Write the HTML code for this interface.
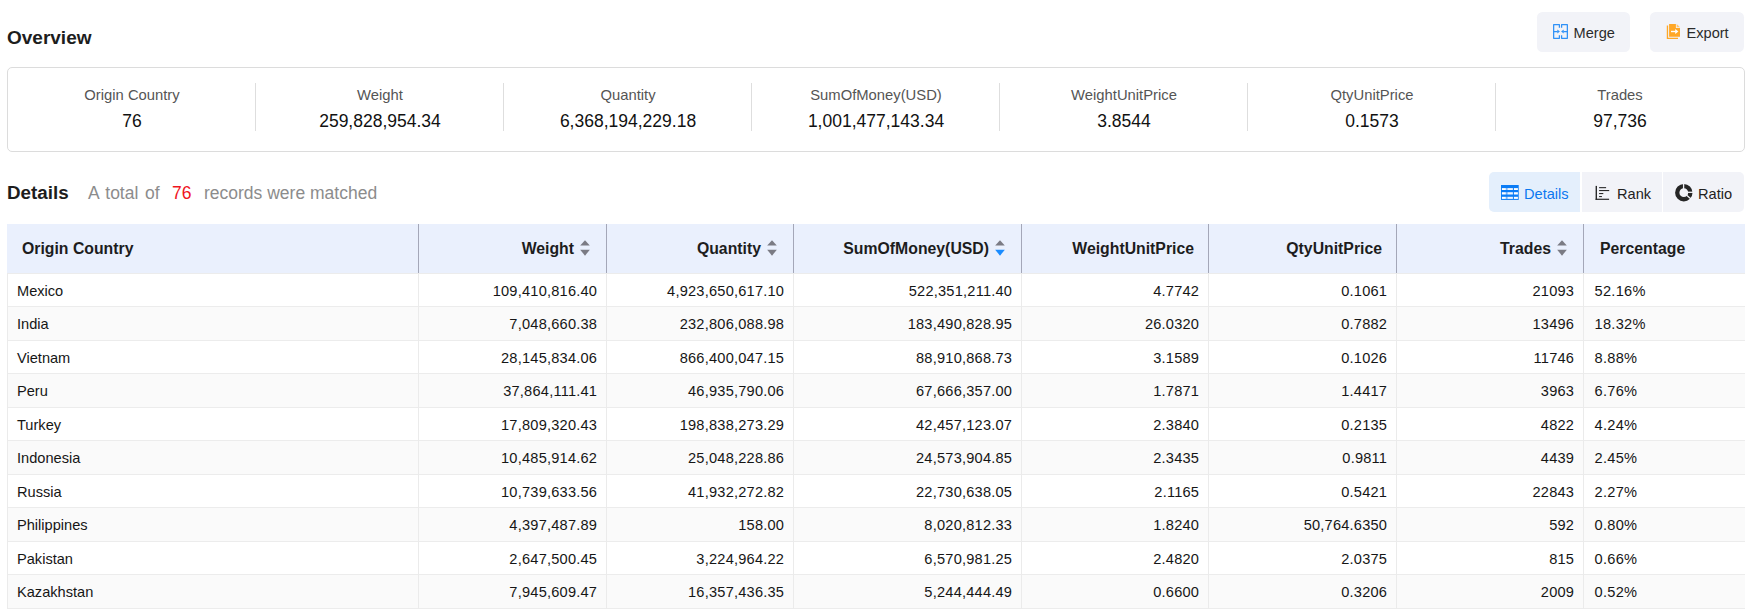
<!DOCTYPE html>
<html><head><meta charset="utf-8"><style>
*{box-sizing:border-box;margin:0;padding:0}
html,body{width:1750px;height:609px;overflow:hidden;background:#fff;font-family:"Liberation Sans",sans-serif;color:#222}
.a{position:absolute;white-space:nowrap}
#ovt{left:7px;top:27px;font-size:19px;font-weight:bold;color:#1d1d1d;line-height:22px}
.btn{position:absolute;top:12px;height:40px;background:#f2f3f8;border-radius:5.5px}
.bt{position:absolute;top:12.5px;line-height:40px;font-size:14.6px;color:#2b2b2b;white-space:nowrap}
#card{left:7px;top:67px;width:1738px;height:85px;border:1px solid #dcdcdc;border-radius:5px}
.lbl{position:absolute;top:86px;width:248px;text-align:center;font-size:14.8px;color:#555;line-height:18px;white-space:nowrap}
.val{position:absolute;top:110px;width:248px;text-align:center;font-size:17.5px;color:#111;line-height:22px;white-space:nowrap}
.dv{position:absolute;top:83px;width:1px;height:48px;background:#dedede}
#dt{left:7px;top:181.5px;font-size:18.8px;font-weight:bold;color:#1d1d1d;line-height:22px}
.ds{position:absolute;top:181.5px;font-size:17.5px;color:#8c8c8c;line-height:22px;white-space:nowrap}
.tabbg{position:absolute;top:172px;height:40px;background:#f2f3f8}
.tab{position:absolute;top:173.5px;height:40px;line-height:40px;font-size:14.6px;color:#222;white-space:nowrap}
#thead{left:7px;top:224px;width:1738px;height:49.8px;background:#eaf0fd;border-bottom:1px solid #ececec}
.th{position:absolute;top:224px;height:49px;line-height:49px;font-size:15.8px;font-weight:bold;color:#1d1d1d;white-space:nowrap}
.hs{position:absolute;top:224px;width:1px;height:49px;background:#a4a7b8}
.bs{position:absolute;width:1px;background:#ebebeb}
.rw{position:absolute;left:7px;width:1738px}
.td{position:absolute;font-size:14.6px;color:#161616;white-space:nowrap;line-height:20px}
svg{position:absolute;overflow:visible}
</style></head><body>
<div id="ovt" class="a">Overview</div>
<div class="btn" style="left:1537px;width:93px"></div>
<svg style="left:1553px;top:24px" width="15" height="15" viewBox="0 0 15 15"><g fill="none" stroke="#2f91f7" stroke-width="1.25" stroke-linejoin="round"><path d="M6.4,3.7V0.65H0.65V14.35H6.4V11.2"/><path d="M8.6,3.7V0.65H14.35V14.35H8.6V11.2"/><path d="M0.65,7.5H4.6M14.35,7.5H10.4"/></g><g fill="#2f91f7"><path d="M4.3,5.6L6.9,7.5L4.3,9.4Z"/><path d="M10.7,5.6L8.1,7.5L10.7,9.4Z"/></g></svg>
<div class="bt" style="left:1573.5px">Merge</div>
<div class="btn" style="left:1650px;width:94px"></div>
<svg style="left:1666px;top:23px" width="15" height="17" viewBox="0 0 15 17"><g fill="#ffa726"><path d="M0.8,2.6H2.1V14.8H12V16H0.8Z"/><path d="M3.1,0.9H9.9V5.1H14V13.8H3.1Z"/></g><path d="M10.7,0.9L14,4.2H10.7Z" fill="#ffc46b"/><g fill="#fff"><path d="M5,7.8H9.6V9.2H5Z"/><path d="M9.2,6.1L12.4,8.5L9.2,10.9Z"/></g></svg>
<div class="bt" style="left:1686.5px">Export</div>
<div id="card" class="a"></div>
<div class="lbl" style="left:8px">Origin Country</div><div class="val" style="left:8px">76</div>
<div class="lbl" style="left:256px">Weight</div><div class="val" style="left:256px">259,828,954.34</div>
<div class="dv" style="left:255px"></div>
<div class="lbl" style="left:504px">Quantity</div><div class="val" style="left:504px">6,368,194,229.18</div>
<div class="dv" style="left:503px"></div>
<div class="lbl" style="left:752px">SumOfMoney(USD)</div><div class="val" style="left:752px">1,001,477,143.34</div>
<div class="dv" style="left:751px"></div>
<div class="lbl" style="left:1000px">WeightUnitPrice</div><div class="val" style="left:1000px">3.8544</div>
<div class="dv" style="left:999px"></div>
<div class="lbl" style="left:1248px">QtyUnitPrice</div><div class="val" style="left:1248px">0.1573</div>
<div class="dv" style="left:1247px"></div>
<div class="lbl" style="left:1496px">Trades</div><div class="val" style="left:1496px">97,736</div>
<div class="dv" style="left:1495px"></div>
<div id="dt" class="a">Details</div>
<div class="ds" style="left:88px;word-spacing:1.7px">A total of</div>
<div class="ds" style="left:172px;color:#f0141e">76</div>
<div class="ds" style="left:204px">records were matched</div>
<div class="tabbg" style="left:1489px;width:91px;background:#e4effc;border-radius:5px 0 0 5px"></div>
<div class="tabbg" style="left:1582px;width:80px"></div>
<div class="tabbg" style="left:1663px;width:81px;border-radius:0 5px 5px 0"></div>
<svg style="left:1501px;top:185px" width="18" height="15" viewBox="0 0 18 15"><rect x="0" y="0" width="17.7" height="14.9" fill="#0b7cf6"/><g fill="#fff"><rect x="0.9" y="3.1" width="4" height="1.9"/><rect x="4.9" y="3.1" width="1.5" height="1.9" fill="#7fb8fb"/><rect x="6.4" y="3.1" width="5.5" height="1.9" fill="#eef5fe"/><rect x="12.9" y="3.1" width="4" height="1.9"/><rect x="0.9" y="7.2" width="4" height="2.3"/><rect x="4.9" y="7.2" width="1.5" height="2.3" fill="#7fb8fb"/><rect x="6.4" y="7.2" width="5.5" height="2.3" fill="#eef5fe"/><rect x="12.9" y="7.2" width="4" height="2.3"/><rect x="0.9" y="11.8" width="4" height="2.1"/><rect x="4.9" y="11.8" width="1.5" height="2.1" fill="#7fb8fb"/><rect x="6.4" y="11.8" width="5.5" height="2.1" fill="#eef5fe"/><rect x="12.9" y="11.8" width="4" height="2.1"/></g></svg>
<div class="tab" style="left:1524px;color:#0b78f0">Details</div>
<svg style="left:1595px;top:185px" width="15" height="15" viewBox="0 0 15 15"><g fill="#2a2a2a"><rect x="0.6" y="0.9" width="1.4" height="14"/><rect x="0.6" y="13.7" width="13.5" height="1.2"/><rect x="4.1" y="2.1" width="7" height="1.1"/><rect x="4.1" y="5" width="10.1" height="1.1"/><rect x="4.1" y="8" width="4.2" height="1.1"/><rect x="4.1" y="11" width="2.8" height="1.1"/></g></svg>
<div class="tab" style="left:1617px">Rank</div>
<svg style="left:1675px;top:184px" width="18" height="18" viewBox="0 0 18 18"><circle cx="8.8" cy="8.7" r="6.55" fill="none" stroke="#262626" stroke-width="4.3"/><g stroke="#f2f3f8" stroke-width="1.3"><path d="M8.6,8.7V-1"/><path d="M8.8,8.3H19"/><path d="M8.8,8.7L16,15"/></g></svg>
<div class="tab" style="left:1698px">Ratio</div>
<div id="thead" class="a"></div>
<div class="th" style="left:22px">Origin Country</div>
<div class="th" style="right:1176px">Weight</div>
<svg style="left:580px;top:240px" width="10" height="16" viewBox="0 0 10 16"><path d="M5,0.2L9.8,5.6H0.2Z" fill="#7b7b84"/><path d="M0.2,9.8H9.8L5,15.8Z" fill="#7b7b84"/></svg>
<div class="hs" style="left:418px"></div>
<div class="th" style="right:989px">Quantity</div>
<svg style="left:767px;top:240px" width="10" height="16" viewBox="0 0 10 16"><path d="M5,0.2L9.8,5.6H0.2Z" fill="#7b7b84"/><path d="M0.2,9.8H9.8L5,15.8Z" fill="#7b7b84"/></svg>
<div class="hs" style="left:606px"></div>
<div class="th" style="right:761px">SumOfMoney(USD)</div>
<svg style="left:995px;top:240px" width="10" height="16" viewBox="0 0 10 16"><path d="M5,0.2L9.8,5.6H0.2Z" fill="#7b7b84"/><path d="M0.2,9.8H9.8L5,15.8Z" fill="#1a8cff"/></svg>
<div class="hs" style="left:793px"></div>
<div class="th" style="right:556px">WeightUnitPrice</div>
<div class="hs" style="left:1021px"></div>
<div class="th" style="right:368px">QtyUnitPrice</div>
<div class="hs" style="left:1208px"></div>
<div class="th" style="right:199px">Trades</div>
<svg style="left:1557px;top:240px" width="10" height="16" viewBox="0 0 10 16"><path d="M5,0.2L9.8,5.6H0.2Z" fill="#7b7b84"/><path d="M0.2,9.8H9.8L5,15.8Z" fill="#7b7b84"/></svg>
<div class="hs" style="left:1396px"></div>
<div class="th" style="left:1600px">Percentage</div>
<div class="hs" style="left:1583px"></div>
<div class="rw" style="top:273.8px;height:33.5px;background:#fff;border-bottom:1px solid #ececec"></div>
<div class="td" style="left:17px;top:280.6px">Mexico</div>
<div class="td" style="right:1152.8px;top:280.6px;letter-spacing:0.22px">109,410,816.40</div>
<div class="td" style="right:965.8px;top:280.6px;letter-spacing:0.22px">4,923,650,617.10</div>
<div class="td" style="right:737.8px;top:280.6px;letter-spacing:0.22px">522,351,211.40</div>
<div class="td" style="right:550.8px;top:280.6px;letter-spacing:0.22px">4.7742</div>
<div class="td" style="right:362.8px;top:280.6px;letter-spacing:0.22px">0.1061</div>
<div class="td" style="right:175.8px;top:280.6px;letter-spacing:0.22px">21093</div>
<div class="td" style="left:1594.5px;top:280.6px;letter-spacing:0.3px">52.16%</div>
<div class="rw" style="top:307.3px;height:33.5px;background:#fafafa;border-bottom:1px solid #ececec"></div>
<div class="td" style="left:17px;top:314.1px">India</div>
<div class="td" style="right:1152.8px;top:314.1px;letter-spacing:0.22px">7,048,660.38</div>
<div class="td" style="right:965.8px;top:314.1px;letter-spacing:0.22px">232,806,088.98</div>
<div class="td" style="right:737.8px;top:314.1px;letter-spacing:0.22px">183,490,828.95</div>
<div class="td" style="right:550.8px;top:314.1px;letter-spacing:0.22px">26.0320</div>
<div class="td" style="right:362.8px;top:314.1px;letter-spacing:0.22px">0.7882</div>
<div class="td" style="right:175.8px;top:314.1px;letter-spacing:0.22px">13496</div>
<div class="td" style="left:1594.5px;top:314.1px;letter-spacing:0.3px">18.32%</div>
<div class="rw" style="top:340.8px;height:33.5px;background:#fff;border-bottom:1px solid #ececec"></div>
<div class="td" style="left:17px;top:347.6px">Vietnam</div>
<div class="td" style="right:1152.8px;top:347.6px;letter-spacing:0.22px">28,145,834.06</div>
<div class="td" style="right:965.8px;top:347.6px;letter-spacing:0.22px">866,400,047.15</div>
<div class="td" style="right:737.8px;top:347.6px;letter-spacing:0.22px">88,910,868.73</div>
<div class="td" style="right:550.8px;top:347.6px;letter-spacing:0.22px">3.1589</div>
<div class="td" style="right:362.8px;top:347.6px;letter-spacing:0.22px">0.1026</div>
<div class="td" style="right:175.8px;top:347.6px;letter-spacing:0.22px">11746</div>
<div class="td" style="left:1594.5px;top:347.6px;letter-spacing:0.3px">8.88%</div>
<div class="rw" style="top:374.3px;height:33.5px;background:#fafafa;border-bottom:1px solid #ececec"></div>
<div class="td" style="left:17px;top:381.1px">Peru</div>
<div class="td" style="right:1152.8px;top:381.1px;letter-spacing:0.22px">37,864,111.41</div>
<div class="td" style="right:965.8px;top:381.1px;letter-spacing:0.22px">46,935,790.06</div>
<div class="td" style="right:737.8px;top:381.1px;letter-spacing:0.22px">67,666,357.00</div>
<div class="td" style="right:550.8px;top:381.1px;letter-spacing:0.22px">1.7871</div>
<div class="td" style="right:362.8px;top:381.1px;letter-spacing:0.22px">1.4417</div>
<div class="td" style="right:175.8px;top:381.1px;letter-spacing:0.22px">3963</div>
<div class="td" style="left:1594.5px;top:381.1px;letter-spacing:0.3px">6.76%</div>
<div class="rw" style="top:407.8px;height:33.5px;background:#fff;border-bottom:1px solid #ececec"></div>
<div class="td" style="left:17px;top:414.6px">Turkey</div>
<div class="td" style="right:1152.8px;top:414.6px;letter-spacing:0.22px">17,809,320.43</div>
<div class="td" style="right:965.8px;top:414.6px;letter-spacing:0.22px">198,838,273.29</div>
<div class="td" style="right:737.8px;top:414.6px;letter-spacing:0.22px">42,457,123.07</div>
<div class="td" style="right:550.8px;top:414.6px;letter-spacing:0.22px">2.3840</div>
<div class="td" style="right:362.8px;top:414.6px;letter-spacing:0.22px">0.2135</div>
<div class="td" style="right:175.8px;top:414.6px;letter-spacing:0.22px">4822</div>
<div class="td" style="left:1594.5px;top:414.6px;letter-spacing:0.3px">4.24%</div>
<div class="rw" style="top:441.3px;height:33.5px;background:#fafafa;border-bottom:1px solid #ececec"></div>
<div class="td" style="left:17px;top:448.1px">Indonesia</div>
<div class="td" style="right:1152.8px;top:448.1px;letter-spacing:0.22px">10,485,914.62</div>
<div class="td" style="right:965.8px;top:448.1px;letter-spacing:0.22px">25,048,228.86</div>
<div class="td" style="right:737.8px;top:448.1px;letter-spacing:0.22px">24,573,904.85</div>
<div class="td" style="right:550.8px;top:448.1px;letter-spacing:0.22px">2.3435</div>
<div class="td" style="right:362.8px;top:448.1px;letter-spacing:0.22px">0.9811</div>
<div class="td" style="right:175.8px;top:448.1px;letter-spacing:0.22px">4439</div>
<div class="td" style="left:1594.5px;top:448.1px;letter-spacing:0.3px">2.45%</div>
<div class="rw" style="top:474.8px;height:33.5px;background:#fff;border-bottom:1px solid #ececec"></div>
<div class="td" style="left:17px;top:481.6px">Russia</div>
<div class="td" style="right:1152.8px;top:481.6px;letter-spacing:0.22px">10,739,633.56</div>
<div class="td" style="right:965.8px;top:481.6px;letter-spacing:0.22px">41,932,272.82</div>
<div class="td" style="right:737.8px;top:481.6px;letter-spacing:0.22px">22,730,638.05</div>
<div class="td" style="right:550.8px;top:481.6px;letter-spacing:0.22px">2.1165</div>
<div class="td" style="right:362.8px;top:481.6px;letter-spacing:0.22px">0.5421</div>
<div class="td" style="right:175.8px;top:481.6px;letter-spacing:0.22px">22843</div>
<div class="td" style="left:1594.5px;top:481.6px;letter-spacing:0.3px">2.27%</div>
<div class="rw" style="top:508.3px;height:33.5px;background:#fafafa;border-bottom:1px solid #ececec"></div>
<div class="td" style="left:17px;top:515.1px">Philippines</div>
<div class="td" style="right:1152.8px;top:515.1px;letter-spacing:0.22px">4,397,487.89</div>
<div class="td" style="right:965.8px;top:515.1px;letter-spacing:0.22px">158.00</div>
<div class="td" style="right:737.8px;top:515.1px;letter-spacing:0.22px">8,020,812.33</div>
<div class="td" style="right:550.8px;top:515.1px;letter-spacing:0.22px">1.8240</div>
<div class="td" style="right:362.8px;top:515.1px;letter-spacing:0.22px">50,764.6350</div>
<div class="td" style="right:175.8px;top:515.1px;letter-spacing:0.22px">592</div>
<div class="td" style="left:1594.5px;top:515.1px;letter-spacing:0.3px">0.80%</div>
<div class="rw" style="top:541.8px;height:33.5px;background:#fff;border-bottom:1px solid #ececec"></div>
<div class="td" style="left:17px;top:548.5999999999999px">Pakistan</div>
<div class="td" style="right:1152.8px;top:548.5999999999999px;letter-spacing:0.22px">2,647,500.45</div>
<div class="td" style="right:965.8px;top:548.5999999999999px;letter-spacing:0.22px">3,224,964.22</div>
<div class="td" style="right:737.8px;top:548.5999999999999px;letter-spacing:0.22px">6,570,981.25</div>
<div class="td" style="right:550.8px;top:548.5999999999999px;letter-spacing:0.22px">2.4820</div>
<div class="td" style="right:362.8px;top:548.5999999999999px;letter-spacing:0.22px">2.0375</div>
<div class="td" style="right:175.8px;top:548.5999999999999px;letter-spacing:0.22px">815</div>
<div class="td" style="left:1594.5px;top:548.5999999999999px;letter-spacing:0.3px">0.66%</div>
<div class="rw" style="top:575.3px;height:33.5px;background:#fafafa;border-bottom:1px solid #ececec"></div>
<div class="td" style="left:17px;top:582.0999999999999px">Kazakhstan</div>
<div class="td" style="right:1152.8px;top:582.0999999999999px;letter-spacing:0.22px">7,945,609.47</div>
<div class="td" style="right:965.8px;top:582.0999999999999px;letter-spacing:0.22px">16,357,436.35</div>
<div class="td" style="right:737.8px;top:582.0999999999999px;letter-spacing:0.22px">5,244,444.49</div>
<div class="td" style="right:550.8px;top:582.0999999999999px;letter-spacing:0.22px">0.6600</div>
<div class="td" style="right:362.8px;top:582.0999999999999px;letter-spacing:0.22px">0.3206</div>
<div class="td" style="right:175.8px;top:582.0999999999999px;letter-spacing:0.22px">2009</div>
<div class="td" style="left:1594.5px;top:582.0999999999999px;letter-spacing:0.3px">0.52%</div>
<div class="bs" style="left:418px;top:273px;height:336px"></div>
<div class="bs" style="left:606px;top:273px;height:336px"></div>
<div class="bs" style="left:793px;top:273px;height:336px"></div>
<div class="bs" style="left:1021px;top:273px;height:336px"></div>
<div class="bs" style="left:1208px;top:273px;height:336px"></div>
<div class="bs" style="left:1396px;top:273px;height:336px"></div>
<div class="bs" style="left:1583px;top:273px;height:336px"></div>
<div class="bs" style="left:7px;top:273px;height:336px"></div>
</body></html>
